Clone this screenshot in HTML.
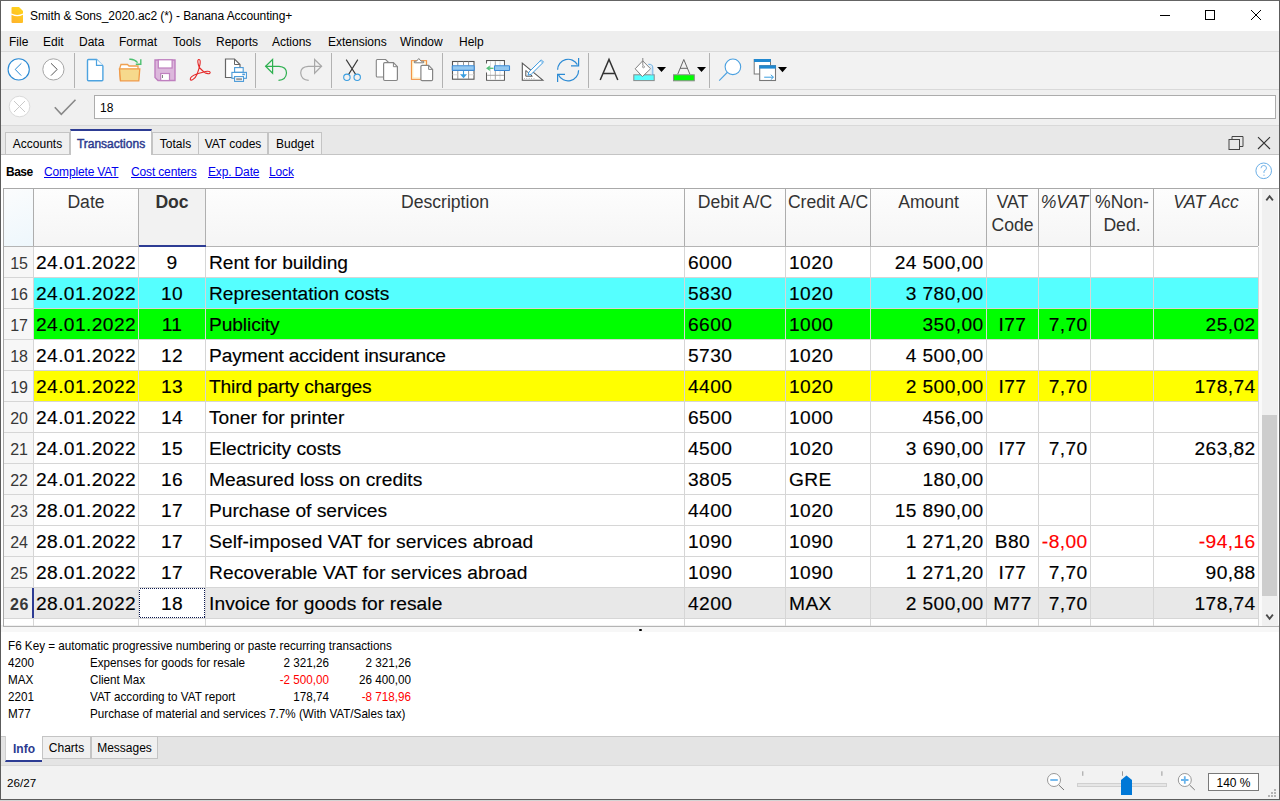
<!DOCTYPE html>
<html><head><meta charset="utf-8">
<style>
*{margin:0;padding:0;box-sizing:border-box}
html,body{width:1280px;height:801px;overflow:hidden;background:#f0f0f0;font-family:"Liberation Sans",sans-serif;color:#000}
.a{position:absolute}
svg{position:absolute;overflow:visible}
#title{left:0;top:0;width:1280px;height:31px;background:#fff}
#menu{left:0;top:31px;width:1278px;height:20px;background:#eeeeee}
#menu span{position:absolute;top:4px;font-size:12px}
.hl{position:absolute;left:0;width:1280px;height:1px;background:#d9d9d9}
.sep{position:absolute;top:53px;width:1px;height:35px;background:#b2b2b2}
.tab{position:absolute;top:132px;height:22px;background:#f0f0f0;border:1px solid #c4c4c4;border-bottom:none;font-size:12px;text-align:center;padding-top:4px;white-space:nowrap}
.sub{position:absolute;top:165px;font-size:12px}
.lk{color:#0000ee;text-decoration:underline;letter-spacing:-0.15px}
.vl{position:absolute;width:1px;background:#d6d6d6}
.hd{position:absolute;font-size:17.6px;color:#333;text-align:center;line-height:23px;white-space:nowrap}
.c{position:absolute;font-size:19.2px;white-space:nowrap;line-height:31px;-webkit-text-stroke:0.15px currentColor}
.rn{position:absolute;font-size:16px;color:#383838;text-align:right;line-height:31px;padding-top:1px;padding-right:5px}
.inf{position:absolute;font-size:11.7px;white-space:nowrap}
.ip{position:absolute;font-size:12.7px;white-space:nowrap;line-height:15px;transform:scaleX(0.92);transform-origin:0 0}
.ipr{position:absolute;font-size:12.7px;white-space:nowrap;line-height:15px;transform:scaleX(0.92);transform-origin:100% 0;text-align:right}
</style></head><body>

<div class="a" id="title"><div class="a" style="left:30px;top:9px;font-size:12px;letter-spacing:-0.08px;white-space:nowrap">Smith &amp; Sons_2020.ac2 (*) - Banana Accounting+</div></div>
<div class="a" id="menu">
<span style="left:9px">File</span>
<span style="left:43px">Edit</span>
<span style="left:79px">Data</span>
<span style="left:119px">Format</span>
<span style="left:173px">Tools</span>
<span style="left:216px">Reports</span>
<span style="left:272px">Actions</span>
<span style="left:328px">Extensions</span>
<span style="left:400px">Window</span>
<span style="left:459px">Help</span>
</div>
<div class="a" style="left:0;top:52px;width:1280px;height:37px;background:#f2f2f2"></div>
<div class="hl" style="top:51px"></div>
<div class="sep" style="left:74px"></div>
<div class="sep" style="left:255px"></div>
<div class="sep" style="left:331px"></div>
<div class="sep" style="left:442px"></div>
<div class="sep" style="left:588px"></div>
<div class="sep" style="left:709px"></div>
<div class="hl" style="top:89px"></div>
<div class="a" style="left:94px;top:95px;width:1182px;height:24px;background:#fff;border:1px solid #acacac;font-size:12px;padding:5px 0 0 5px">18</div>
<div class="hl" style="top:125px"></div>
<div class="a" style="left:1px;top:126px;width:1278px;height:28px;background:#e8e8e8"></div>
<div class="a" style="left:1px;top:154px;width:1278px;height:1px;background:#c4c4c4"></div>
<div class="tab" style="left:5px;width:65px">Accounts</div>
<div class="tab" style="left:152px;width:47px">Totals</div>
<div class="tab" style="left:198px;width:70px">VAT codes</div>
<div class="tab" style="left:268px;width:54px">Budget</div>
<div class="tab" style="left:70px;width:82px;top:129px;height:26px;background:#fff;border-top:2px solid #2d3c94;color:#2b3a8f;padding-top:6px;-webkit-text-stroke:0.45px #2b3a8f">Transactions</div>
<div class="a" style="left:1px;top:155px;width:1278px;height:470px;background:#fff"></div>
<span class="sub" style="left:6px;font-weight:bold;letter-spacing:-0.5px">Base</span>
<span class="sub lk" style="left:44px">Complete VAT</span>
<span class="sub lk" style="left:131px">Cost centers</span>
<span class="sub lk" style="left:208px">Exp. Date</span>
<span class="sub lk" style="left:269px">Lock</span>
<div class="a" style="left:4px;top:188px;width:1255px;height:1px;background:#a9a9a9"></div>
<div class="a" style="left:4px;top:189px;width:1254px;height:57px;background:linear-gradient(#fdfdfd,#f5f5f5)"></div>
<div class="a" style="left:4px;top:189px;width:29px;height:57px;background:linear-gradient(160deg,#fbfcfd,#eef7fc)"></div>
<div class="a" style="left:139px;top:189px;width:66px;height:57px;background:#f2f2f2"></div>
<div class="a" style="left:3px;top:188px;width:1px;height:438px;background:#a9a9a9"></div>
<div class="a" style="left:4px;top:246px;width:1254px;height:1px;background:#b4b4b4"></div>
<div class="a" style="left:4px;top:247px;width:29px;height:30px;background:#f7f7f7"></div>
<div class="a" style="left:4px;top:277px;width:1254px;height:1px;background:#d6d6d6"></div>
<div class="a" style="left:4px;top:278px;width:29px;height:30px;background:#f7f7f7"></div>
<div class="a" style="left:34px;top:278px;width:1224px;height:30px;background:#55ffff"></div>
<div class="a" style="left:4px;top:308px;width:1254px;height:1px;background:#d6d6d6"></div>
<div class="a" style="left:4px;top:309px;width:29px;height:30px;background:#f7f7f7"></div>
<div class="a" style="left:34px;top:309px;width:1224px;height:30px;background:#00ff00"></div>
<div class="a" style="left:4px;top:339px;width:1254px;height:1px;background:#d6d6d6"></div>
<div class="a" style="left:4px;top:340px;width:29px;height:30px;background:#f7f7f7"></div>
<div class="a" style="left:4px;top:370px;width:1254px;height:1px;background:#d6d6d6"></div>
<div class="a" style="left:4px;top:371px;width:29px;height:30px;background:#f7f7f7"></div>
<div class="a" style="left:34px;top:371px;width:1224px;height:30px;background:#ffff00"></div>
<div class="a" style="left:4px;top:401px;width:1254px;height:1px;background:#d6d6d6"></div>
<div class="a" style="left:4px;top:402px;width:29px;height:30px;background:#f7f7f7"></div>
<div class="a" style="left:4px;top:432px;width:1254px;height:1px;background:#d6d6d6"></div>
<div class="a" style="left:4px;top:433px;width:29px;height:30px;background:#f7f7f7"></div>
<div class="a" style="left:4px;top:463px;width:1254px;height:1px;background:#d6d6d6"></div>
<div class="a" style="left:4px;top:464px;width:29px;height:30px;background:#f7f7f7"></div>
<div class="a" style="left:4px;top:494px;width:1254px;height:1px;background:#d6d6d6"></div>
<div class="a" style="left:4px;top:495px;width:29px;height:30px;background:#f7f7f7"></div>
<div class="a" style="left:4px;top:525px;width:1254px;height:1px;background:#d6d6d6"></div>
<div class="a" style="left:4px;top:526px;width:29px;height:30px;background:#f7f7f7"></div>
<div class="a" style="left:4px;top:556px;width:1254px;height:1px;background:#d6d6d6"></div>
<div class="a" style="left:4px;top:557px;width:29px;height:30px;background:#f7f7f7"></div>
<div class="a" style="left:4px;top:587px;width:1254px;height:1px;background:#d6d6d6"></div>
<div class="a" style="left:4px;top:588px;width:29px;height:30px;background:#efefef"></div>
<div class="a" style="left:34px;top:588px;width:1224px;height:30px;background:#e8e8e8"></div>
<div class="a" style="left:4px;top:618px;width:1254px;height:1px;background:#d6d6d6"></div>
<div class="a" style="left:139px;top:588px;width:66px;height:30px;background:#fff"></div>
<svg width="66" height="30" style="left:139px;top:588px"><rect x="0.5" y="0.5" width="65" height="29" fill="none" stroke="#0c1850" stroke-width="1" stroke-dasharray="1 1" shape-rendering="crispEdges"/></svg>
<div class="vl" style="left:33px;top:247px;height:379px"></div>
<div class="vl" style="left:33px;top:189px;height:57px;background:#adadad"></div>
<div class="vl" style="left:138px;top:247px;height:379px"></div>
<div class="vl" style="left:138px;top:189px;height:57px;background:#adadad"></div>
<div class="vl" style="left:205px;top:247px;height:379px"></div>
<div class="vl" style="left:205px;top:189px;height:57px;background:#adadad"></div>
<div class="vl" style="left:684px;top:247px;height:379px"></div>
<div class="vl" style="left:684px;top:189px;height:57px;background:#adadad"></div>
<div class="vl" style="left:785px;top:247px;height:379px"></div>
<div class="vl" style="left:785px;top:189px;height:57px;background:#adadad"></div>
<div class="vl" style="left:870px;top:247px;height:379px"></div>
<div class="vl" style="left:870px;top:189px;height:57px;background:#adadad"></div>
<div class="vl" style="left:986px;top:247px;height:379px"></div>
<div class="vl" style="left:986px;top:189px;height:57px;background:#adadad"></div>
<div class="vl" style="left:1038px;top:247px;height:379px"></div>
<div class="vl" style="left:1038px;top:189px;height:57px;background:#adadad"></div>
<div class="vl" style="left:1090px;top:247px;height:379px"></div>
<div class="vl" style="left:1090px;top:189px;height:57px;background:#adadad"></div>
<div class="vl" style="left:1153px;top:247px;height:379px"></div>
<div class="vl" style="left:1153px;top:189px;height:57px;background:#adadad"></div>
<div class="vl" style="left:1258px;top:247px;height:379px"></div>
<div class="vl" style="left:1258px;top:189px;height:57px;background:#adadad"></div>
<div class="a" style="left:3px;top:626px;width:1276px;height:1px;background:#b4b4b4"></div>
<div class="a" style="left:1px;top:627px;width:1278px;height:5px;background:#f7f7f7"></div>
<div class="a" style="left:639px;top:629px;width:3px;height:2px;background:#000;border-radius:1px"></div>
<div class="a" style="left:138px;top:189px;width:1px;height:57px;background:#b0b0b0"></div>
<div class="a" style="left:205px;top:189px;width:1px;height:57px;background:#b0b0b0"></div>
<div class="a" style="left:139px;top:245px;width:67px;height:2px;background:#2d3c94"></div>
<div class="hd" style="left:34px;top:191px;width:104px;">Date</div>
<div class="hd" style="left:139px;top:191px;width:66px;font-weight:bold">Doc</div>
<div class="hd" style="left:206px;top:191px;width:478px;">Description</div>
<div class="hd" style="left:685px;top:191px;width:100px;">Debit A/C</div>
<div class="hd" style="left:786px;top:191px;width:84px;">Credit A/C</div>
<div class="hd" style="left:871px;top:191px;width:115px;">Amount</div>
<div class="hd" style="left:987px;top:191px;width:51px;">VAT<br>Code</div>
<div class="hd" style="left:1039px;top:191px;width:51px;font-style:italic">%VAT</div>
<div class="hd" style="left:1091px;top:191px;width:62px;">%Non-<br>Ded.</div>
<div class="hd" style="left:1154px;top:191px;width:104px;font-style:italic">VAT Acc</div>
<div class="rn" style="left:4px;top:247px;width:29px;">15</div>
<div class="c" style="left:36px;top:247px;letter-spacing:0.4px;">24.01.2022</div>
<div class="c" style="left:139px;top:247px;width:66px;text-align:center;letter-spacing:0.4px;">9</div>
<div class="c" style="left:209px;top:247px;letter-spacing:-0.05px;">Rent for building</div>
<div class="c" style="left:688px;top:247px;letter-spacing:0.4px;">6000</div>
<div class="c" style="left:789px;top:247px;letter-spacing:0.4px;">1020</div>
<div class="c" style="left:870px;top:247px;width:113.6px;text-align:right;letter-spacing:0.4px;">24 500,00</div>
<div class="rn" style="left:4px;top:278px;width:29px;">16</div>
<div class="c" style="left:36px;top:278px;letter-spacing:0.4px;">24.01.2022</div>
<div class="c" style="left:139px;top:278px;width:66px;text-align:center;letter-spacing:0.4px;">10</div>
<div class="c" style="left:209px;top:278px;letter-spacing:0px;">Representation costs</div>
<div class="c" style="left:688px;top:278px;letter-spacing:0.4px;">5830</div>
<div class="c" style="left:789px;top:278px;letter-spacing:0.4px;">1020</div>
<div class="c" style="left:870px;top:278px;width:113.6px;text-align:right;letter-spacing:0.4px;">3 780,00</div>
<div class="rn" style="left:4px;top:309px;width:29px;">17</div>
<div class="c" style="left:36px;top:309px;letter-spacing:0.4px;">24.01.2022</div>
<div class="c" style="left:139px;top:309px;width:66px;text-align:center;letter-spacing:0.4px;">11</div>
<div class="c" style="left:209px;top:309px;letter-spacing:-0.1px;">Publicity</div>
<div class="c" style="left:688px;top:309px;letter-spacing:0.4px;">6600</div>
<div class="c" style="left:789px;top:309px;letter-spacing:0.4px;">1000</div>
<div class="c" style="left:870px;top:309px;width:113.6px;text-align:right;letter-spacing:0.4px;">350,00</div>
<div class="c" style="left:987px;top:309px;width:51px;text-align:center;letter-spacing:0.4px;">I77</div>
<div class="c" style="left:1038px;top:309px;width:49.6px;text-align:right;letter-spacing:0.4px;">7,70</div>
<div class="c" style="left:1153px;top:309px;width:102.6px;text-align:right;letter-spacing:0.4px;">25,02</div>
<div class="rn" style="left:4px;top:340px;width:29px;">18</div>
<div class="c" style="left:36px;top:340px;letter-spacing:0.4px;">24.01.2022</div>
<div class="c" style="left:139px;top:340px;width:66px;text-align:center;letter-spacing:0.4px;">12</div>
<div class="c" style="left:209px;top:340px;letter-spacing:-0.16px;">Payment accident insurance</div>
<div class="c" style="left:688px;top:340px;letter-spacing:0.4px;">5730</div>
<div class="c" style="left:789px;top:340px;letter-spacing:0.4px;">1020</div>
<div class="c" style="left:870px;top:340px;width:113.6px;text-align:right;letter-spacing:0.4px;">4 500,00</div>
<div class="rn" style="left:4px;top:371px;width:29px;">19</div>
<div class="c" style="left:36px;top:371px;letter-spacing:0.4px;">24.01.2022</div>
<div class="c" style="left:139px;top:371px;width:66px;text-align:center;letter-spacing:0.4px;">13</div>
<div class="c" style="left:209px;top:371px;letter-spacing:-0.15px;">Third party charges</div>
<div class="c" style="left:688px;top:371px;letter-spacing:0.4px;">4400</div>
<div class="c" style="left:789px;top:371px;letter-spacing:0.4px;">1020</div>
<div class="c" style="left:870px;top:371px;width:113.6px;text-align:right;letter-spacing:0.4px;">2 500,00</div>
<div class="c" style="left:987px;top:371px;width:51px;text-align:center;letter-spacing:0.4px;">I77</div>
<div class="c" style="left:1038px;top:371px;width:49.6px;text-align:right;letter-spacing:0.4px;">7,70</div>
<div class="c" style="left:1153px;top:371px;width:102.6px;text-align:right;letter-spacing:0.4px;">178,74</div>
<div class="rn" style="left:4px;top:402px;width:29px;">20</div>
<div class="c" style="left:36px;top:402px;letter-spacing:0.4px;">24.01.2022</div>
<div class="c" style="left:139px;top:402px;width:66px;text-align:center;letter-spacing:0.4px;">14</div>
<div class="c" style="left:209px;top:402px;letter-spacing:0px;">Toner for printer</div>
<div class="c" style="left:688px;top:402px;letter-spacing:0.4px;">6500</div>
<div class="c" style="left:789px;top:402px;letter-spacing:0.4px;">1000</div>
<div class="c" style="left:870px;top:402px;width:113.6px;text-align:right;letter-spacing:0.4px;">456,00</div>
<div class="rn" style="left:4px;top:433px;width:29px;">21</div>
<div class="c" style="left:36px;top:433px;letter-spacing:0.4px;">24.01.2022</div>
<div class="c" style="left:139px;top:433px;width:66px;text-align:center;letter-spacing:0.4px;">15</div>
<div class="c" style="left:209px;top:433px;letter-spacing:0px;">Electricity costs</div>
<div class="c" style="left:688px;top:433px;letter-spacing:0.4px;">4500</div>
<div class="c" style="left:789px;top:433px;letter-spacing:0.4px;">1020</div>
<div class="c" style="left:870px;top:433px;width:113.6px;text-align:right;letter-spacing:0.4px;">3 690,00</div>
<div class="c" style="left:987px;top:433px;width:51px;text-align:center;letter-spacing:0.4px;">I77</div>
<div class="c" style="left:1038px;top:433px;width:49.6px;text-align:right;letter-spacing:0.4px;">7,70</div>
<div class="c" style="left:1153px;top:433px;width:102.6px;text-align:right;letter-spacing:0.4px;">263,82</div>
<div class="rn" style="left:4px;top:464px;width:29px;">22</div>
<div class="c" style="left:36px;top:464px;letter-spacing:0.4px;">24.01.2022</div>
<div class="c" style="left:139px;top:464px;width:66px;text-align:center;letter-spacing:0.4px;">16</div>
<div class="c" style="left:209px;top:464px;letter-spacing:0px;">Measured loss on credits</div>
<div class="c" style="left:688px;top:464px;letter-spacing:0.4px;">3805</div>
<div class="c" style="left:789px;top:464px;letter-spacing:0.4px;">GRE</div>
<div class="c" style="left:870px;top:464px;width:113.6px;text-align:right;letter-spacing:0.4px;">180,00</div>
<div class="rn" style="left:4px;top:495px;width:29px;">23</div>
<div class="c" style="left:36px;top:495px;letter-spacing:0.4px;">28.01.2022</div>
<div class="c" style="left:139px;top:495px;width:66px;text-align:center;letter-spacing:0.4px;">17</div>
<div class="c" style="left:209px;top:495px;letter-spacing:0px;">Purchase of services</div>
<div class="c" style="left:688px;top:495px;letter-spacing:0.4px;">4400</div>
<div class="c" style="left:789px;top:495px;letter-spacing:0.4px;">1020</div>
<div class="c" style="left:870px;top:495px;width:113.6px;text-align:right;letter-spacing:0.4px;">15 890,00</div>
<div class="rn" style="left:4px;top:526px;width:29px;">24</div>
<div class="c" style="left:36px;top:526px;letter-spacing:0.4px;">28.01.2022</div>
<div class="c" style="left:139px;top:526px;width:66px;text-align:center;letter-spacing:0.4px;">17</div>
<div class="c" style="left:209px;top:526px;letter-spacing:0.12px;">Self-imposed VAT for services abroad</div>
<div class="c" style="left:688px;top:526px;letter-spacing:0.4px;">1090</div>
<div class="c" style="left:789px;top:526px;letter-spacing:0.4px;">1090</div>
<div class="c" style="left:870px;top:526px;width:113.6px;text-align:right;letter-spacing:0.4px;">1 271,20</div>
<div class="c" style="left:987px;top:526px;width:51px;text-align:center;letter-spacing:0.4px;">B80</div>
<div class="c" style="left:1038px;top:526px;width:49.6px;text-align:right;color:#ff0000;letter-spacing:0.4px;">-8,00</div>
<div class="c" style="left:1153px;top:526px;width:102.6px;text-align:right;color:#ff0000;letter-spacing:0.4px;">-94,16</div>
<div class="rn" style="left:4px;top:557px;width:29px;">25</div>
<div class="c" style="left:36px;top:557px;letter-spacing:0.4px;">28.01.2022</div>
<div class="c" style="left:139px;top:557px;width:66px;text-align:center;letter-spacing:0.4px;">17</div>
<div class="c" style="left:209px;top:557px;letter-spacing:0.08px;">Recoverable VAT for services abroad</div>
<div class="c" style="left:688px;top:557px;letter-spacing:0.4px;">1090</div>
<div class="c" style="left:789px;top:557px;letter-spacing:0.4px;">1090</div>
<div class="c" style="left:870px;top:557px;width:113.6px;text-align:right;letter-spacing:0.4px;">1 271,20</div>
<div class="c" style="left:987px;top:557px;width:51px;text-align:center;letter-spacing:0.4px;">I77</div>
<div class="c" style="left:1038px;top:557px;width:49.6px;text-align:right;letter-spacing:0.4px;">7,70</div>
<div class="c" style="left:1153px;top:557px;width:102.6px;text-align:right;letter-spacing:0.4px;">90,88</div>
<div class="rn" style="left:4px;top:588px;width:29px;font-weight:bold;letter-spacing:0.6px;padding-right:4px;">26</div>
<div class="c" style="left:36px;top:588px;letter-spacing:0.4px;">28.01.2022</div>
<div class="c" style="left:139px;top:588px;width:66px;text-align:center;letter-spacing:0.4px;">18</div>
<div class="c" style="left:209px;top:588px;letter-spacing:0.07px;">Invoice for goods for resale</div>
<div class="c" style="left:688px;top:588px;letter-spacing:0.4px;">4200</div>
<div class="c" style="left:789px;top:588px;letter-spacing:0.4px;">MAX</div>
<div class="c" style="left:870px;top:588px;width:113.6px;text-align:right;letter-spacing:0.4px;">2 500,00</div>
<div class="c" style="left:987px;top:588px;width:51px;text-align:center;letter-spacing:0.4px;">M77</div>
<div class="c" style="left:1038px;top:588px;width:49.6px;text-align:right;letter-spacing:0.4px;">7,70</div>
<div class="c" style="left:1153px;top:588px;width:102.6px;text-align:right;letter-spacing:0.4px;">178,74</div>
<div class="a" style="left:32px;top:588px;width:2px;height:30px;background:#2d3c94"></div>
<div class="a" style="left:1259px;top:189px;width:3px;height:437px;background:#fafafa"></div>
<div class="a" style="left:1262px;top:189px;width:16px;height:437px;background:#f0f0f0"></div>
<div class="a" style="left:1258px;top:188px;width:21px;height:1px;background:#a9a9a9"></div>
<div class="a" style="left:1262px;top:415px;width:15px;height:181px;background:#cdcdcd"></div>
<div class="a" style="left:1px;top:632px;width:1278px;height:104px;background:#fff"></div>
<div class="ip" style="left:8px;top:639px">F6 Key = automatic progressive numbering or paste recurring transactions</div>
<div class="ip" style="left:8px;top:656px">4200</div>
<div class="ip" style="left:90px;top:656px">Expenses for goods for resale</div>
<div class="ipr" style="left:200px;width:129px;top:656px;">2 321,26</div>
<div class="ipr" style="left:300px;width:111px;top:656px;">2 321,26</div>
<div class="ip" style="left:8px;top:673px">MAX</div>
<div class="ip" style="left:90px;top:673px">Client Max</div>
<div class="ipr" style="left:200px;width:129px;top:673px;color:#ff0000">-2 500,00</div>
<div class="ipr" style="left:300px;width:111px;top:673px;">26 400,00</div>
<div class="ip" style="left:8px;top:690px">2201</div>
<div class="ip" style="left:90px;top:690px">VAT according to VAT report</div>
<div class="ipr" style="left:200px;width:129px;top:690px;">178,74</div>
<div class="ipr" style="left:300px;width:111px;top:690px;color:#ff0000">-8 718,96</div>
<div class="ip" style="left:8px;top:707px">M77</div>
<div class="ip" style="left:90px;top:707px">Purchase of material and services 7.7% (With VAT/Sales tax)</div>
<div class="a" style="left:1px;top:736px;width:1278px;height:29px;background:#e4e4e4"></div>
<div class="a" style="left:1px;top:736px;width:1278px;height:1px;background:#c8c8c8"></div>
<div class="a" style="left:1px;top:766px;width:1278px;height:33px;background:#f2f2f2"></div>
<div class="a" style="left:42px;top:736px;width:49px;height:23px;background:#f0f0f0;border:1px solid #c4c4c4;font-size:12px;text-align:center;padding-top:4px">Charts</div>
<div class="a" style="left:91px;top:736px;width:67px;height:23px;background:#f0f0f0;border:1px solid #c4c4c4;font-size:12px;text-align:center;padding-top:4px">Messages</div>
<div class="a" style="left:5px;top:736px;width:37px;height:26px;background:#fff;border-left:1px solid #d0d0d0;border-bottom:2px solid #2d3c94;color:#2b3a8f;font-size:12px;font-weight:bold;text-align:center;padding-top:6px">Info</div>
<div class="hl" style="top:765px"></div>
<div class="inf" style="left:7px;top:776px">26/27</div>
<div class="a" style="left:1208px;top:773px;width:51px;height:18px;background:#fff;border:1px solid #7a7a7a;font-size:12px;text-align:center;padding-top:2px">140 %</div>
<div class="a" style="left:0;top:0;width:1px;height:801px;background:#5c5c5c"></div>
<div class="a" style="left:0;top:0;width:1280px;height:1px;background:#646464"></div>
<div class="a" style="left:1279px;top:0;width:1px;height:801px;background:#5c5c5c"></div>
<div class="a" style="left:0;top:799px;width:1280px;height:1px;background:#5c5c5c"></div>
<div class="a" style="left:0;top:800px;width:1280px;height:1px;background:#d4d4d4"></div>

<svg width="1280" height="801" style="left:0;top:0;position:absolute">
<!-- app icon -->
<defs><linearGradient id="ag" gradientUnits="userSpaceOnUse" x1="11" y1="23" x2="23" y2="7"><stop offset="0" stop-color="#ffb02c"/><stop offset="1" stop-color="#ffd81a"/></linearGradient></defs>
<path d="M11.5 8 Q11.5 7 12.5 7 L19 7 L23 11 L23 13.6 Q17.3 16.2 11.5 13.6 Z" fill="url(#ag)"/>
<path d="M11.5 14.8 Q17.3 17.8 23 14.8 L23 22 Q23 23 22 23 L12.5 23 Q11.5 23 11.5 22 Z" fill="url(#ag)"/>
<!-- window controls -->
<rect x="1160" y="15" width="10" height="1" fill="#000"/>
<rect x="1205.5" y="10.5" width="9" height="9" fill="none" stroke="#000" stroke-width="1"/>
<path d="M1251 10 L1261 20 M1261 10 L1251 20" stroke="#000" stroke-width="1"/>
<!-- back / forward -->
<circle cx="18.7" cy="69.4" r="10.6" fill="#fff" stroke="#2a8ad4" stroke-width="1.1"/>
<path d="M21.4 63.3 L15.2 69.4 L21.2 75.6" fill="none" stroke="#2a8ad4" stroke-width="1"/>
<circle cx="53.4" cy="69.4" r="10.6" fill="#fff" stroke="#a6a6a6" stroke-width="1"/>
<path d="M51 63.3 L57.2 69.4 L51 75.6" fill="none" stroke="#555" stroke-width="1"/>
<!-- new doc -->
<path d="M87.5 60.5 Q87.5 59.5 88.5 59.5 L96.5 59.5 L102.9 66 L102.9 79.8 Q102.9 80.8 101.9 80.8 L88.5 80.8 Q87.5 80.8 87.5 79.8 Z" fill="#fff" stroke="#4da3e0" stroke-width="1.4"/>
<path d="M96.5 59.5 L96.5 65.3 L102.9 65.3" fill="#fff" stroke="#4da3e0" stroke-width="1.2"/>
<!-- open folder -->
<path d="M120.5 80.8 L119.5 69 L121 64.5 L127.5 64.5 L129 66 L138 66 L138 69" fill="#fff" stroke="#f0a050" stroke-width="1.3"/>
<path d="M119.5 68.8 L139.8 68.8 L138.8 80.8 L120.5 80.8 Z" fill="#f6d98c" stroke="#f09a48" stroke-width="1.3"/>
<path d="M129.3 59.3 Q134 58.6 137.6 62.6" fill="none" stroke="#4cc070" stroke-width="1.4"/>
<path d="M140.8 59.2 L140.8 64.2 L135.8 64.2" fill="none" stroke="#4cc070" stroke-width="1.4"/>
<!-- save -->
<path d="M155 60 L175 60 L175 80.5 L158 80.5 L155 77.5 Z" fill="#dcb8dc" stroke="#bf7fbf" stroke-width="1.4"/>
<rect x="158.3" y="59.8" width="13.8" height="8.2" fill="#fff" stroke="#bf7fbf" stroke-width="1.2"/>
<rect x="160.7" y="73.5" width="8.8" height="7" fill="#fff" stroke="#bf7fbf" stroke-width="1.2"/>
<rect x="162" y="75" width="0.9" height="3" fill="#777"/>
<!-- pdf -->
<g fill="none" stroke="#e52a2a" stroke-width="1.1" stroke-linejoin="round">
<path d="M199.3 67.5 L197.3 73.7 L203.9 72 Z"/>
<path d="M199.3 67.5 C197.8 63.5 197.1 59.7 198.8 59.5 C200.6 59.3 200.6 63.2 199.3 67.5"/>
<path d="M203.9 72 C206.2 70.8 210.2 70.9 210.2 72.6 C210.2 74.3 206.3 73.9 203.9 72"/>
<path d="M197.3 73.7 C194 74.8 190 77.2 190.3 79.4 C190.6 81.4 195 79.3 197.3 73.7"/>
</g>
<!-- print preview -->
<path d="M225.5 59 L234.5 59 L240 64.5 L240 77.5 L225.5 77.5 Z" fill="#fff" stroke="#666" stroke-width="1.2"/>
<path d="M234.5 59 L234.5 64.5 L240 64.5" fill="none" stroke="#666" stroke-width="1"/>
<rect x="234.6" y="67.6" width="8.6" height="4.7" fill="#fff" stroke="#4a9ad8" stroke-width="1.1"/>
<rect x="231.9" y="72.4" width="14.5" height="5.9" fill="#fff" stroke="#4a9ad8" stroke-width="1.1"/>
<rect x="242.3" y="73.6" width="2.6" height="1.6" fill="#4a9ad8"/>
<rect x="234.6" y="76.6" width="8.9" height="4.8" fill="#fff" stroke="#4a9ad8" stroke-width="1.1"/>
<rect x="236.2" y="78.2" width="5.8" height="2" fill="#999"/>
<!-- undo -->
<path d="M272.6 59.5 L265.6 66.3 L272.6 73.2 Z" fill="none" stroke="#2eb050" stroke-width="1.2"/>
<path d="M265.6 66.3 L279 66.3 Q286.5 66.8 286.5 73 Q286 80 278.5 80.3" fill="none" stroke="#2eb050" stroke-width="1.2"/>
<!-- redo -->
<path d="M314.6 59.5 L321.6 66.3 L314.6 73.2 Z" fill="none" stroke="#a8a8a8" stroke-width="1.2"/>
<path d="M321.6 66.3 L308.2 66.3 Q300.7 66.8 300.7 73 Q301.2 80 308.7 80.3" fill="none" stroke="#a8a8a8" stroke-width="1.2"/>
<!-- scissors -->
<path d="M346.2 59.6 L355.8 74.6 M357.8 59.6 L348.5 74.6" stroke="#3a3a3a" stroke-width="1.1"/>
<circle cx="346.9" cy="77.3" r="3.2" fill="none" stroke="#3a9ee0" stroke-width="1.1"/>
<circle cx="357.2" cy="77.3" r="3.2" fill="none" stroke="#3a9ee0" stroke-width="1.1"/>
<!-- copy -->
<path d="M376.3 60.6 Q376.3 59.5 377.4 59.5 H385.6 L388.4 62.3 V77 H377.4 Q376.3 77 376.3 75.9 Z" fill="#fff" stroke="#858585" stroke-width="1.1"/>
<path d="M383.6 63.9 Q383.6 62.7 384.8 62.7 H393.4 L397.4 66.7 V79.3 Q397.4 80.5 396.2 80.5 H384.8 Q383.6 80.5 383.6 79.3 Z" fill="#fff" stroke="#858585" stroke-width="1.2"/>
<path d="M393.4 62.7 V66.7 H397.4" fill="none" stroke="#858585" stroke-width="1"/>
<!-- paste -->
<rect x="411.5" y="60.7" width="15" height="18.6" fill="#fff" stroke="#f29446" stroke-width="1.2"/>
<rect x="412.8" y="62" width="12.4" height="16" fill="none" stroke="#fde7aa" stroke-width="0.9"/>
<path d="M414.4 62.8 V61.2 H416.5 L418.8 58.5 L421.1 61.2 H423.6 V62.8 Z" fill="#fff" stroke="#7e7e7e" stroke-width="1" stroke-linejoin="round"/>
<path d="M420.9 66.6 Q420.9 65.4 422.1 65.4 H428.6 L432.6 69.4 V79.4 Q432.6 80.6 431.4 80.6 H422.1 Q420.9 80.6 420.9 79.4 Z" fill="#fff" stroke="#858585" stroke-width="1.2"/>
<path d="M428.6 65.4 V69.4 H432.6" fill="none" stroke="#858585" stroke-width="1"/>
<!-- insert row -->
<rect x="452.5" y="61.5" width="21.5" height="17.7" fill="#fff" stroke="#555" stroke-width="1.1"/>
<path d="M457.8 61.5 V79 M463.5 61.5 V65 M468.6 61.5 V79" stroke="#8a8a8a" stroke-width="0.9"/>
<path d="M452.5 74.8 H457.5 M468.8 74.8 H474" stroke="#d4d4d4" stroke-width="0.9"/>
<rect x="452.3" y="65.8" width="21.9" height="4.6" rx="0.5" fill="#94c8f0" stroke="#3d8ad6" stroke-width="1.1"/>
<path d="M463.5 71 V75" stroke="#3a9ee0" stroke-width="1.1"/>
<path d="M460 74.3 H467 L463.5 78.2 Z" fill="#3a9ee0"/>
<!-- insert col -->
<path d="M486.6 63.5 V60.6 H504.4 V80.2 H486.6 V72.5" fill="#fff" stroke="#555" stroke-width="1.1"/>
<rect x="487.2" y="61.2" width="16.6" height="18.4" fill="#fff"/>
<path d="M490.5 61.2 V79.6 M500 61.2 V79.6" stroke="#dcdcdc" stroke-width="1"/>
<path d="M495.3 61.2 V79.6 M487.2 75.3 H504" stroke="#9a9a9a" stroke-width="0.9"/>
<rect x="494.5" y="65.8" width="15" height="4.7" rx="0.5" fill="#94c8f0" stroke="#3d8ad6" stroke-width="1.1"/>
<path d="M489.5 68.3 H493.5" stroke="#55c07a" stroke-width="1.3"/>
<path d="M486 68.3 L489.8 65.6 V71 Z" fill="#55c07a"/>
<!-- triangle ruler -->
<path d="M522.3 63.2 L542.8 80.2 L522.3 80.2 Z" fill="#fff" stroke="#555" stroke-width="1.1" stroke-linejoin="miter"/>
<path d="M525.8 70.5 L532.3 76.2 L525.8 76.2 Z" fill="#fff" stroke="#555" stroke-width="1"/>
<path d="M524 78.5 H536" stroke="#999" stroke-width="0.8" stroke-dasharray="0.8 1.6"/>
<path d="M541.3 59.9 L543.5 62.1 L531.3 74.2 L528 75.2 L529 71.9 Z" fill="#fff" stroke="#3d9ae0" stroke-width="1" stroke-linejoin="round"/>
<path d="M540.3 60.8 L542.6 63.1" stroke="#3d9ae0" stroke-width="0.7"/>
<!-- refresh -->
<g fill="none" stroke="#2a8ad4" stroke-width="1.2">
<path d="M557.6 69.8 A10.6 10.6 0 0 1 577.4 64.6"/>
<path d="M578.6 58 V65.8 H571"/>
<path d="M578.6 70.2 A10.6 10.6 0 0 1 558.4 74.8"/>
<path d="M557.6 82 V74.3 H565"/>
</g>
<!-- font A -->
<path d="M600.2 80 L609 59.5 L617.8 80 M603.3 73.5 H614.7" fill="none" stroke="#333" stroke-width="1.5"/>
<!-- fill color -->
<rect x="633.8" y="74.8" width="20.4" height="5.8" fill="#55ffff" stroke="#8a8a8a" stroke-width="1"/>
<path d="M642.7 60.8 L650.6 68.8 L642.4 76.6 L635.2 68.8 Z" fill="#fff" stroke="#808080" stroke-width="1" stroke-linejoin="round"/>
<path d="M642.8 58 V65.5" stroke="#777" stroke-width="0.9"/>
<circle cx="643.5" cy="66.8" r="1" fill="none" stroke="#777" stroke-width="0.7"/>
<path d="M648.3 64.3 Q652.8 63.8 652.8 68 V75" fill="none" stroke="#6ab0e8" stroke-width="1"/><path d="M649.5 65.6 Q651.2 65.6 651.2 68.2 V75" fill="none" stroke="#b8dcf6" stroke-width="0.8"/>
<path d="M657 67 H666 L661.5 72 Z" fill="#000"/>
<!-- font color -->
<rect x="673.5" y="74.8" width="20.8" height="6" fill="#00ff00" stroke="#8a8a8a" stroke-width="1"/>
<path d="M677.8 74 L683.8 59.5 L689.8 74 M680 68.3 H687.5" fill="none" stroke="#666" stroke-width="1"/>
<path d="M697 67 H706 L701.5 72 Z" fill="#000"/>
<!-- search -->
<circle cx="732.9" cy="66.8" r="7.8" fill="#fff" stroke="#4aa0e0" stroke-width="1.1"/>
<path d="M727.2 72.5 L719.2 80.7" stroke="#4aa0e0" stroke-width="1.1"/>
<!-- windows -->
<rect x="754.2" y="59.5" width="16.3" height="14.5" fill="#fff" stroke="#777" stroke-width="1"/>
<rect x="754" y="59" width="16.8" height="3" fill="#2088d0"/>
<rect x="759.7" y="65.7" width="15.8" height="14.8" fill="#fff" stroke="#777" stroke-width="1.1"/>
<rect x="759.3" y="65.3" width="16.6" height="3.3" fill="#2088d0"/>
<path d="M764.2 77.2 H773.2 M770.8 74.8 L773.5 77.2 L770.8 79.6" fill="none" stroke="#3a9ee0" stroke-width="1"/>
<path d="M778 67.1 H787 L782.5 72.2 Z" fill="#000"/>
<!-- formula bar cancel / accept -->
<circle cx="19.5" cy="106.5" r="10.3" fill="#fff" stroke="#dadada" stroke-width="1"/>
<path d="M14 101 L25 112 M25 101 L14 112" stroke="#c4c4c4" stroke-width="0.9"/>
<path d="M54.8 107.2 L61.3 114.3 L75.5 99.7" fill="none" stroke="#888" stroke-width="1.6"/>
<!-- tab restore / close -->
<rect x="1229" y="139.5" width="10.5" height="10" fill="none" stroke="#444" stroke-width="1"/>
<path d="M1232 139.5 V136.5 H1243 V146.5 H1239.5" fill="none" stroke="#444" stroke-width="1"/>
<path d="M1258 137.2 L1270 149 M1270 137.2 L1258 149" stroke="#333" stroke-width="1.1"/>
<!-- help -->
<circle cx="1263.7" cy="170.8" r="7.8" fill="#fff" stroke="#6aaee6" stroke-width="1"/>
<path d="M1261 168.2 Q1261 165.5 1263.8 165.5 Q1266.5 165.5 1266.5 168 Q1266.5 170 1264 171 V173" fill="none" stroke="#6aaee6" stroke-width="0.9"/>
<circle cx="1264" cy="175.2" r="0.6" fill="#6aaee6"/>
<!-- scroll arrows -->
<path d="M1266.3 200.4 L1269.6 196.2 L1272.9 200.4" fill="none" stroke="#4a4a4a" stroke-width="1.8"/>
<path d="M1266.3 614.6 L1269.6 618.8 L1272.9 614.6" fill="none" stroke="#4a4a4a" stroke-width="1.8"/>
<!-- zoom -->
<circle cx="1054" cy="780" r="6.5" fill="#fff" stroke="#999" stroke-width="1"/>
<path d="M1050.3 780 H1057.8" stroke="#6ab4ec" stroke-width="1.8"/>
<path d="M1058.8 785 L1064 790" stroke="#777" stroke-width="1"/>
<rect x="1077.5" y="783.5" width="89" height="3" fill="#e6e6e6" stroke="#d0d0d0" stroke-width="1"/>
<path d="M1082.8 771.3 V775.8 M1122.5 771.3 V775.8 M1161.9 771.3 V775.8" stroke="#9a9a9a" stroke-width="1"/>
<path d="M1121 780 L1126.5 775.6 L1132 780 L1132 795 L1121 795 Z" fill="#0078d7"/>
<circle cx="1184.8" cy="780" r="6.5" fill="#fff" stroke="#999" stroke-width="1"/>
<path d="M1181 780 H1188.5 M1184.8 776.3 V783.8" stroke="#6ab4ec" stroke-width="1.8"/>
<path d="M1189.6 785 L1194.8 790" stroke="#777" stroke-width="1"/>
<!-- grip -->
<g fill="#b4b4b4"><rect x="1274" y="789" width="2" height="2"/><rect x="1271" y="792" width="2" height="2"/><rect x="1274" y="792" width="2" height="2"/><rect x="1268" y="795" width="2" height="2"/><rect x="1271" y="795" width="2" height="2"/><rect x="1274" y="795" width="2" height="2"/></g>
</svg>

</body></html>
